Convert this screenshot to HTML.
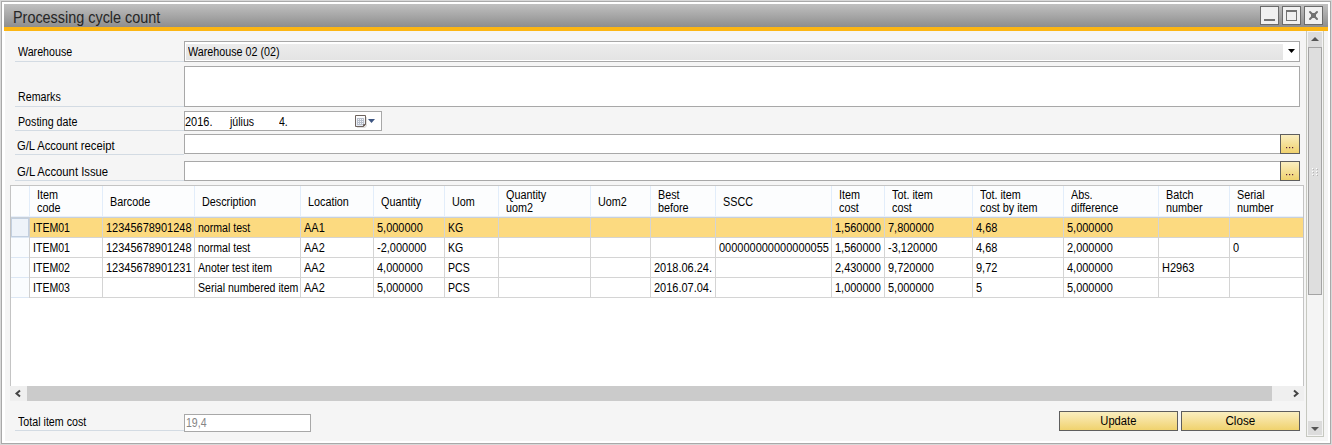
<!DOCTYPE html>
<html><head><meta charset="utf-8">
<style>
*{box-sizing:border-box;margin:0;padding:0}
html,body{width:1332px;height:445px;overflow:hidden;background:#fff}
body{position:relative;font-family:"Liberation Sans",sans-serif;font-size:11px;color:#000}
.a{position:absolute}
.wb{width:19px;height:19px;border:1px solid #6b6b6b;background:#f0f0f0;top:6px}
.lbl{left:18px;white-space:nowrap;font-size:12px;transform:scaleX(.89);transform-origin:0 0;line-height:14px}
.sep{left:15px;width:169px;height:1px;background:#d3dbe3}
.box{border:1px solid #a8a8a8;background:#fff}
.btn{border:1px solid #5e5e5e;background:linear-gradient(#faeec0,#f0d26e);text-align:center}
.t{white-space:nowrap;font-size:12px;transform:scaleX(.88);transform-origin:0 0;line-height:14px}
.hd{height:31px;display:flex;align-items:center;line-height:13px;white-space:nowrap;color:#000;font-size:12px;transform:scaleX(.9);transform-origin:0 0}
.c{line-height:19px;padding-top:1px;white-space:nowrap;font-size:12px;transform:scaleX(.88);transform-origin:0 0}
</style></head><body>
<div class="a" style="left:0;top:0;width:1332px;height:445px;border:1px solid #d8d8d8;background:#fff"></div>
<div class="a" style="left:1px;top:1px;width:1330px;height:443px;border:1px solid #a9a9a9;background:#fff"></div>
<div class="a" style="left:4px;top:4px;width:1324px;height:23px;background:linear-gradient(#c0c0c0,#8e8e8e)"><span class="a" style="left:9px;top:5px;font-size:16px;transform:scaleX(.9);transform-origin:0 0;color:#262626;white-space:nowrap">Processing cycle count</span></div>
<div class="a wb" style="left:1260px"><div class="a" style="left:3px;top:12px;width:11px;height:2px;background:#737373"></div></div>
<div class="a wb" style="left:1282px"><div class="a" style="left:3px;top:3px;width:11px;height:11px;border:1px solid #737373;border-top-width:2px"></div></div>
<div class="a wb" style="left:1304px"><svg class="a" style="left:0;top:0" width="17" height="17"><path d="M5 5L12 12M12 5L5 12" stroke="#727272" stroke-width="2" stroke-linecap="round"/><rect x="6" y="6" width="5" height="5" fill="#727272"/></svg></div>
<div class="a" style="left:4px;top:27px;width:1324px;height:4px;background:#fcb614"></div>
<div class="a" style="left:5px;top:31px;width:1323px;height:410px;background:#f5f5f5"></div>

<!-- Warehouse -->
<div class="a lbl" style="top:45px">Warehouse</div>
<div class="a sep" style="top:61px"></div>
<div class="a box" style="left:184px;top:41px;width:1116px;height:21px"></div>
<div class="a" style="left:186px;top:44px;width:1097px;height:16px;background:linear-gradient(#ececec,#e4e4e4)"></div>
<div class="a t" style="left:188px;top:45px;transform:scaleX(.895)">Warehouse 02 (02)</div>
<svg class="a" style="left:1288px;top:49px" width="7" height="5"><path d="M0 0H7L3.5 4Z" fill="#000"/></svg>

<!-- Remarks -->
<div class="a box" style="left:184px;top:66px;width:1116px;height:41px"></div>
<div class="a lbl" style="top:90px">Remarks</div>
<div class="a sep" style="top:106px"></div>

<!-- Posting date -->
<div class="a lbl" style="top:115px">Posting date</div>
<div class="a sep" style="top:130px"></div>
<div class="a box" style="left:184px;top:111px;width:198px;height:20px"></div>
<div class="a t" style="left:185px;top:115px;transform:scaleX(.915)">2016.</div>
<div class="a t" style="left:230px;top:115px">július</div>
<div class="a t" style="left:279px;top:115px">4.</div>
<svg class="a" style="left:354px;top:114px" width="24" height="15"><defs><linearGradient id="cg" x1="0" y1="0" x2="0" y2="1"><stop offset="0" stop-color="#ffffff"/><stop offset="1" stop-color="#e2e8f2"/></linearGradient></defs>
<path d="M2 2H12V11L10 13H2Z" fill="#000" opacity=".12" transform="translate(1,1)"/>
<path d="M1.5 1.5H11.5V10.5L9.5 12.5H1.5Z" fill="url(#cg)" stroke="#6e635d" stroke-width="1"/>
<rect x="3" y="4" width="7" height="7" fill="#b9c0cc"/>
<g fill="#f4f6fa"><rect x="4" y="5" width="1" height="1"/><rect x="4" y="7" width="1" height="1"/><rect x="4" y="9" width="1" height="1"/><rect x="6" y="5" width="1" height="1"/><rect x="6" y="7" width="1" height="1"/><rect x="6" y="9" width="1" height="1"/><rect x="8" y="5" width="1" height="1"/><rect x="8" y="7" width="1" height="1"/><rect x="8" y="9" width="1" height="1"/></g>
<path d="M9.5 12.5V10.5H11.5" fill="none" stroke="#6e635d" stroke-width="1"/>
<path d="M14 5H21L17.5 9Z" fill="#3d5582"/></svg>

<!-- GL receipt -->
<div class="a lbl" style="top:139px;left:17px;transform:scaleX(.935)">G/L Account receipt</div>
<div class="a sep" style="top:154px"></div>
<div class="a box" style="left:184px;top:134px;width:1097px;height:20px"></div>
<div class="a btn dots" style="left:1280px;top:134px;width:20px;height:20px"><svg class="a" style="left:5px;top:12px" width="9" height="2"><g fill="#5a1f3a"><rect x="0" y="0" width="1.2" height="1.2"/><rect x="3" y="0" width="1.2" height="1.2"/><rect x="6" y="0" width="1.2" height="1.2"/></g></svg></div>

<!-- GL issue -->
<div class="a lbl" style="top:165px;left:17px;transform:scaleX(.94)">G/L Account Issue</div>
<div class="a sep" style="top:180px"></div>
<div class="a box" style="left:184px;top:161px;width:1097px;height:20px"></div>
<div class="a btn dots" style="left:1280px;top:161px;width:20px;height:20px"><svg class="a" style="left:5px;top:12px" width="9" height="2"><g fill="#5a1f3a"><rect x="0" y="0" width="1.2" height="1.2"/><rect x="3" y="0" width="1.2" height="1.2"/><rect x="6" y="0" width="1.2" height="1.2"/></g></svg></div>

<!-- Grid -->
<div class="a" style="left:10px;top:185px;width:1294px;height:201px;border:1px solid #c4c4c4;border-bottom:0;background:#fff"></div>
<div class="a" style="left:11px;top:186px;width:1292px;height:31px;background:#fcfdfe"></div>
<div class="a" style="left:11px;top:216px;width:1292px;height:1px;background:#e8f0fa"></div>
<div class="a" style="left:11px;top:217px;width:1292px;height:1px;background:#c8d0da"></div>
<div class="a" style="left:29px;top:186px;width:1px;height:30px;background:#e2edfa"></div>
<div class="a" style="left:102px;top:186px;width:1px;height:30px;background:#e2edfa"></div>
<div class="a" style="left:194px;top:186px;width:1px;height:30px;background:#e2edfa"></div>
<div class="a" style="left:300px;top:186px;width:1px;height:30px;background:#e2edfa"></div>
<div class="a" style="left:373px;top:186px;width:1px;height:30px;background:#e2edfa"></div>
<div class="a" style="left:444px;top:186px;width:1px;height:30px;background:#e2edfa"></div>
<div class="a" style="left:498px;top:186px;width:1px;height:30px;background:#e2edfa"></div>
<div class="a" style="left:590px;top:186px;width:1px;height:30px;background:#e2edfa"></div>
<div class="a" style="left:650px;top:186px;width:1px;height:30px;background:#e2edfa"></div>
<div class="a" style="left:715px;top:186px;width:1px;height:30px;background:#e2edfa"></div>
<div class="a" style="left:831px;top:186px;width:1px;height:30px;background:#e2edfa"></div>
<div class="a" style="left:884px;top:186px;width:1px;height:30px;background:#e2edfa"></div>
<div class="a" style="left:972px;top:186px;width:1px;height:30px;background:#e2edfa"></div>
<div class="a" style="left:1063px;top:186px;width:1px;height:30px;background:#e2edfa"></div>
<div class="a" style="left:1158px;top:186px;width:1px;height:30px;background:#e2edfa"></div>
<div class="a" style="left:1229px;top:186px;width:1px;height:30px;background:#e2edfa"></div>
<div class="a hd" style="left:37px;top:186px;width:65px;">Item<br>code</div>
<div class="a hd" style="left:110px;top:186px;width:84px;padding-top:1px;">Barcode</div>
<div class="a hd" style="left:202px;top:186px;width:98px;padding-top:1px;">Description</div>
<div class="a hd" style="left:308px;top:186px;width:65px;padding-top:1px;">Location</div>
<div class="a hd" style="left:381px;top:186px;width:63px;padding-top:1px;">Quantity</div>
<div class="a hd" style="left:452px;top:186px;width:46px;padding-top:1px;">Uom</div>
<div class="a hd" style="left:506px;top:186px;width:84px;">Quantity<br>uom2</div>
<div class="a hd" style="left:598px;top:186px;width:52px;padding-top:1px;">Uom2</div>
<div class="a hd" style="left:658px;top:186px;width:57px;">Best<br>before</div>
<div class="a hd" style="left:723px;top:186px;width:108px;padding-top:1px;">SSCC</div>
<div class="a hd" style="left:839px;top:186px;width:45px;">Item<br>cost</div>
<div class="a hd" style="left:892px;top:186px;width:80px;">Tot. item<br>cost</div>
<div class="a hd" style="left:980px;top:186px;width:83px;">Tot. item<br>cost by item</div>
<div class="a hd" style="left:1071px;top:186px;width:87px;">Abs.<br>difference</div>
<div class="a hd" style="left:1166px;top:186px;width:63px;">Batch<br>number</div>
<div class="a hd" style="left:1237px;top:186px;width:66px;">Serial<br>number</div>
<div class="a" style="left:11px;top:218px;width:18px;height:80px;background:#fafcfe"></div>
<div class="a" style="left:30px;top:218px;width:1273px;height:19px;background:#fcda80"></div>
<div class="a" style="left:11px;top:218px;width:18px;height:19px;background:#eef3f9;border:1px solid #c3d0e0"></div>
<div class="a" style="left:30px;top:237px;width:1273px;height:1px;background:#d4d4d4"></div>
<div class="a" style="left:11px;top:237px;width:18px;height:1px;background:#dce7f4"></div>
<div class="a c" style="left:33px;top:218px;">ITEM01</div>
<div class="a c" style="left:106px;top:218px;transform:scaleX(.915);">12345678901248</div>
<div class="a c" style="left:198px;top:218px;">normal test</div>
<div class="a c" style="left:304px;top:218px;transform:scaleX(.915);">AA1</div>
<div class="a c" style="left:377px;top:218px;transform:scaleX(.915);">5,000000</div>
<div class="a c" style="left:448px;top:218px;">KG</div>
<div class="a c" style="left:835px;top:218px;transform:scaleX(.915);">1,560000</div>
<div class="a c" style="left:888px;top:218px;transform:scaleX(.915);">7,800000</div>
<div class="a c" style="left:976px;top:218px;transform:scaleX(.915);">4,68</div>
<div class="a c" style="left:1067px;top:218px;transform:scaleX(.915);">5,000000</div>
<div class="a" style="left:30px;top:257px;width:1273px;height:1px;background:#d4d4d4"></div>
<div class="a" style="left:11px;top:257px;width:18px;height:1px;background:#dce7f4"></div>
<div class="a c" style="left:33px;top:238px;">ITEM01</div>
<div class="a c" style="left:106px;top:238px;transform:scaleX(.915);">12345678901248</div>
<div class="a c" style="left:198px;top:238px;">normal test</div>
<div class="a c" style="left:304px;top:238px;transform:scaleX(.915);">AA2</div>
<div class="a c" style="left:377px;top:238px;transform:scaleX(.915);">-2,000000</div>
<div class="a c" style="left:448px;top:238px;">KG</div>
<div class="a c" style="left:719px;top:238px;transform:scaleX(.915);">000000000000000055</div>
<div class="a c" style="left:835px;top:238px;transform:scaleX(.915);">1,560000</div>
<div class="a c" style="left:888px;top:238px;transform:scaleX(.915);">-3,120000</div>
<div class="a c" style="left:976px;top:238px;transform:scaleX(.915);">4,68</div>
<div class="a c" style="left:1067px;top:238px;transform:scaleX(.915);">2,000000</div>
<div class="a c" style="left:1233px;top:238px;transform:scaleX(.915);">0</div>
<div class="a" style="left:30px;top:277px;width:1273px;height:1px;background:#d4d4d4"></div>
<div class="a" style="left:11px;top:277px;width:18px;height:1px;background:#dce7f4"></div>
<div class="a c" style="left:33px;top:258px;">ITEM02</div>
<div class="a c" style="left:106px;top:258px;transform:scaleX(.915);">12345678901231</div>
<div class="a c" style="left:198px;top:258px;">Anoter test item</div>
<div class="a c" style="left:304px;top:258px;transform:scaleX(.915);">AA2</div>
<div class="a c" style="left:377px;top:258px;transform:scaleX(.915);">4,000000</div>
<div class="a c" style="left:448px;top:258px;">PCS</div>
<div class="a c" style="left:654px;top:258px;transform:scaleX(.915);">2018.06.24.</div>
<div class="a c" style="left:835px;top:258px;transform:scaleX(.915);">2,430000</div>
<div class="a c" style="left:888px;top:258px;transform:scaleX(.915);">9,720000</div>
<div class="a c" style="left:976px;top:258px;transform:scaleX(.915);">9,72</div>
<div class="a c" style="left:1067px;top:258px;transform:scaleX(.915);">4,000000</div>
<div class="a c" style="left:1162px;top:258px;transform:scaleX(.915);">H2963</div>
<div class="a" style="left:30px;top:297px;width:1273px;height:1px;background:#d4d4d4"></div>
<div class="a" style="left:11px;top:297px;width:18px;height:1px;background:#dce7f4"></div>
<div class="a c" style="left:33px;top:278px;">ITEM03</div>
<div class="a c" style="left:198px;top:278px;">Serial numbered item</div>
<div class="a c" style="left:304px;top:278px;transform:scaleX(.915);">AA2</div>
<div class="a c" style="left:377px;top:278px;transform:scaleX(.915);">5,000000</div>
<div class="a c" style="left:448px;top:278px;">PCS</div>
<div class="a c" style="left:654px;top:278px;transform:scaleX(.915);">2016.07.04.</div>
<div class="a c" style="left:835px;top:278px;transform:scaleX(.915);">1,000000</div>
<div class="a c" style="left:888px;top:278px;transform:scaleX(.915);">5,000000</div>
<div class="a c" style="left:976px;top:278px;transform:scaleX(.915);">5</div>
<div class="a c" style="left:1067px;top:278px;transform:scaleX(.915);">5,000000</div>
<div class="a" style="left:29px;top:218px;width:1px;height:80px;background:#d0d0d0"></div>
<div class="a" style="left:102px;top:218px;width:1px;height:80px;background:#d4d4d4"></div>
<div class="a" style="left:194px;top:218px;width:1px;height:80px;background:#d4d4d4"></div>
<div class="a" style="left:300px;top:218px;width:1px;height:80px;background:#d4d4d4"></div>
<div class="a" style="left:373px;top:218px;width:1px;height:80px;background:#d4d4d4"></div>
<div class="a" style="left:444px;top:218px;width:1px;height:80px;background:#d4d4d4"></div>
<div class="a" style="left:498px;top:218px;width:1px;height:80px;background:#d4d4d4"></div>
<div class="a" style="left:590px;top:218px;width:1px;height:80px;background:#d4d4d4"></div>
<div class="a" style="left:650px;top:218px;width:1px;height:80px;background:#d4d4d4"></div>
<div class="a" style="left:715px;top:218px;width:1px;height:80px;background:#d4d4d4"></div>
<div class="a" style="left:831px;top:218px;width:1px;height:80px;background:#d4d4d4"></div>
<div class="a" style="left:884px;top:218px;width:1px;height:80px;background:#d4d4d4"></div>
<div class="a" style="left:972px;top:218px;width:1px;height:80px;background:#d4d4d4"></div>
<div class="a" style="left:1063px;top:218px;width:1px;height:80px;background:#d4d4d4"></div>
<div class="a" style="left:1158px;top:218px;width:1px;height:80px;background:#d4d4d4"></div>
<div class="a" style="left:1229px;top:218px;width:1px;height:80px;background:#d4d4d4"></div>

<!-- hscroll -->
<div class="a" style="left:10px;top:386px;width:1294px;height:15px;background:#efefef"></div>
<div class="a" style="left:27px;top:386px;width:1245px;height:15px;background:#cbcbcb"></div>
<svg class="a" style="left:14px;top:389px" width="8" height="9"><path d="M6 1.5L2.5 4.5L6 7.5" stroke="#444" stroke-width="2" fill="none"/></svg>
<svg class="a" style="left:1292px;top:389px" width="8" height="9"><path d="M2 1.5L5.5 4.5L2 7.5" stroke="#444" stroke-width="2" fill="none"/></svg>

<!-- total -->
<div class="a lbl" style="top:415px">Total item cost</div>
<div class="a sep" style="top:430px"></div>
<div class="a box" style="left:184px;top:414px;width:127px;height:18px"></div>
<div class="a t" style="left:186px;top:416px;color:#858585">19,4</div>

<div class="a btn" style="left:1059px;top:411px;width:119px;height:20px;line-height:18px"><span style="display:inline-block;font-size:12px;transform:scaleX(.93)">Update</span></div>
<div class="a btn" style="left:1181px;top:411px;width:119px;height:20px;line-height:18px"><span style="display:inline-block;font-size:12px;transform:scaleX(.97)">Close</span></div>

<!-- vscroll -->
<div class="a" style="left:1306px;top:31px;width:18px;height:406px;border:1px solid #c6c8c0;border-top:0;background:#f4f4f4"></div>
<div class="a" style="left:1308px;top:32px;width:14px;height:15px;background:#dcdcdc"></div>
<svg class="a" style="left:1311px;top:37px" width="8" height="4"><path d="M0 4H8L4 0Z" fill="#555"/></svg>
<div class="a" style="left:1308px;top:47px;width:14px;height:248px;border:1px solid #a4a4a4;background:#dedede"></div>
<svg class="a" style="left:1312px;top:168px" width="6" height="9"><rect x="0" y="0" width="1" height="1" fill="#fff"/><rect x="1" y="1" width="1" height="1" fill="#b4b4b4"/><rect x="0" y="3" width="1" height="1" fill="#fff"/><rect x="1" y="4" width="1" height="1" fill="#b4b4b4"/><rect x="0" y="6" width="1" height="1" fill="#fff"/><rect x="1" y="7" width="1" height="1" fill="#b4b4b4"/><rect x="4" y="0" width="1" height="1" fill="#fff"/><rect x="5" y="1" width="1" height="1" fill="#b4b4b4"/><rect x="4" y="3" width="1" height="1" fill="#fff"/><rect x="5" y="4" width="1" height="1" fill="#b4b4b4"/><rect x="4" y="6" width="1" height="1" fill="#fff"/><rect x="5" y="7" width="1" height="1" fill="#b4b4b4"/></svg>
<div class="a" style="left:1308px;top:421px;width:14px;height:14px;background:#dcdcdc"></div>
<svg class="a" style="left:1311px;top:427px" width="8" height="4"><path d="M0 0H8L4 4Z" fill="#555"/></svg>
</body></html>
